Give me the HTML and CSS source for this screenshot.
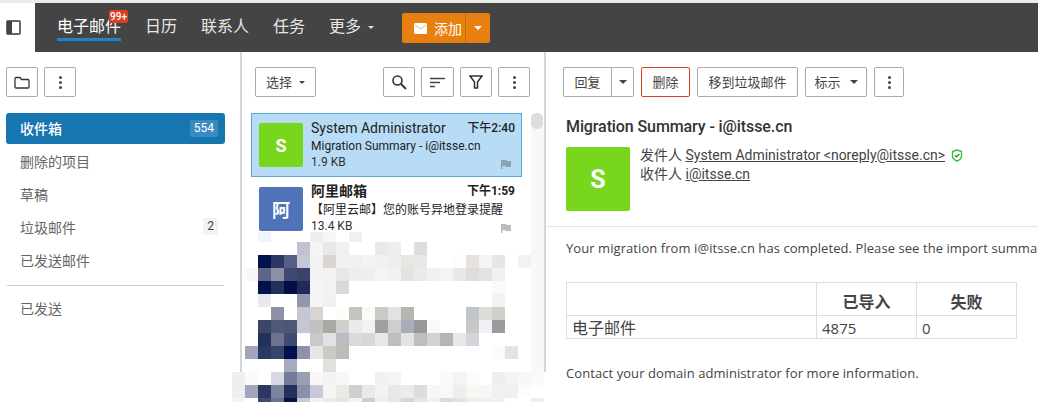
FILE: index.html
```html
<!DOCTYPE html>
<html lang="zh-CN">
<head>
<meta charset="utf-8">
<title>电子邮件</title>
<link rel="stylesheet" href="styles.css">
</head>
<body>
<header class="topbar">
  <div class="toggle">
    <svg width="15" height="15" viewBox="0 0 15 15"><rect x="1" y="1" width="13" height="13" fill="#fff" stroke="#666" stroke-width="2" rx="1"/><rect x="1" y="1" width="5" height="13" fill="#444"/></svg>
  </div>
  <nav class="nav">
    <div class="nav-link active">电子邮件<span class="count">99+</span></div>
    <div class="nav-link">日历</div>
    <div class="nav-link">联系人</div>
    <div class="nav-link">任务</div>
    <div class="nav-link">更多<span class="caret light"></span></div>
    <div class="add">
      <div class="add-main">
        <svg width="13" height="11" viewBox="0 0 13 11"><rect width="13" height="11" rx="1.5" fill="#fff"/><path d="M1 2l5.5 4L12 2" fill="none" stroke="#f0b070" stroke-width="1"/></svg>
        添加
      </div>
      <div class="add-drop"><span class="caret white"></span></div>
    </div>
  </nav>
</header>
<main class="main">
  <aside class="sidebar">
    <div class="toolbar">
      <button class="btn icon">
        <svg width="16" height="13" viewBox="0 0 16 13"><path d="M1 2.500a1 1 0 0 1 1-1h4l1.500 2H14a1 1 0 0 1 1 1V11a1 1 0 0 1-1 1H2a1 1 0 0 1-1-1z" fill="none" stroke="#333" stroke-width="1.300"/></svg>
      </button>
      <button class="btn icon"><span class="dots"><i></i><i></i><i></i></span></button>
    </div>
    <ul class="folders">
      <li class="folder selected">收件箱<span class="num">554</span></li>
      <li class="folder">删除的项目</li>
      <li class="folder">草稿</li>
      <li class="folder">垃圾邮件<span class="num">2</span></li>
      <li class="folder">已发送邮件</li>
    </ul>
    <hr class="rule">
    <ul class="folders">
      <li class="folder">已发送</li>
    </ul>
  </aside>
  <section class="list">
    <div class="toolbar list-tools">
      <button class="btn select">选择<span class="caret"></span></button>
      <div class="spacer"></div>
      <button class="btn icon">
        <svg width="16" height="16" viewBox="0 0 16 16"><circle cx="6.500" cy="6.500" r="4.500" fill="none" stroke="#333" stroke-width="1.600"/><path d="M10 10l5 5" stroke="#333" stroke-width="1.800"/></svg>
      </button>
      <button class="btn icon sort">
        <svg width="15" height="11" viewBox="0 0 15 11"><path d="M0 1.500h15M0 5.500h10M0 9.500h5" stroke="#444" stroke-width="1.400"/></svg>
      </button>
      <button class="btn icon">
        <svg width="14" height="14" viewBox="0 0 14 14"><path d="M1 1h12L8.500 7v6h-3V7z" fill="none" stroke="#333" stroke-width="1.500"/></svg>
      </button>
      <button class="btn icon"><span class="dots"><i></i><i></i><i></i></span></button>
    </div>
    <div class="msgs">
      <article class="msg current">
        <div class="avatar small green">S</div>
        <div class="msg-body">
          <div class="msg-top"><span>System Administrator</span><span class="time">下午2:40</span></div>
          <div class="msg-sub">Migration Summary - i@itsse.cn</div>
          <div class="msg-size">1.9 KB
            <svg class="flag" width="10" height="9" viewBox="0 0 10 9"><path d="M0 0h5l1 1h4v6H5L4 6H1.500v3H0z" fill="#8ba3b5"/></svg>
          </div>
        </div>
      </article>
      <article class="msg unread">
        <div class="avatar small blue">阿</div>
        <div class="msg-body">
          <div class="msg-top"><span>阿里邮箱</span><span class="time">下午1:59</span></div>
          <div class="msg-sub">【阿里云邮】您的账号异地登录提醒</div>
          <div class="msg-size">13.4 KB
            <svg class="flag" width="10" height="9" viewBox="0 0 10 9"><path d="M0 0h5l1 1h4v6H5L4 6H1.500v3H0z" fill="#bbb"/></svg>
          </div>
        </div>
      </article>
      <div class="track"><div class="thumb"></div></div>
    </div>
  </section>
  <section class="reader">
    <div class="toolbar reader-tools">
      <div class="group">
        <button class="btn joined-l">回复</button>
        <button class="btn joined-r"><span class="caret big"></span></button>
      </div>
      <button class="btn danger">删除</button>
      <button class="btn move">移到垃圾邮件</button>
      <button class="btn mark">标示<span class="caret big"></span></button>
      <button class="btn icon narrow"><span class="dots"><i></i><i></i><i></i></span></button>
    </div>
    <h1 class="subject">Migration Summary - i@itsse.cn</h1>
    <div class="meta">
      <div class="avatar large green">S</div>
      <div class="people">
        <div>发件人 <a class="addr">System Administrator &lt;noreply@itsse.cn&gt;</a>
          <svg class="shield" width="12" height="13" viewBox="0 0 12 13"><path d="M6 1l4.500 1.500V7c0 2.500-2 4-4.500 5C3.500 11 1.500 9.500 1.500 7V2.500z" fill="none" stroke="#2ec13c" stroke-width="1.400"/><path d="M3.800 6.300l1.700 1.700 2.800-3" fill="none" stroke="#2a7a3a" stroke-width="1.200"/></svg>
        </div>
        <div>收件人 <a class="addr">i@itsse.cn</a></div>
      </div>
    </div>
    <div class="content">
      <p class="line first">Your migration from i@itsse.cn has completed. Please see the import summary below for details.</p>
      <table class="summary">
        <tr class="head"><th class="c1"></th><th class="c2">已导入</th><th class="c3">失败</th></tr>
        <tr class="row"><td class="lead">电子邮件</td><td>4875</td><td>0</td></tr>
      </table>
      <p class="line">Contact your domain administrator for more information.</p>
    </div>
  </section>
</main>
<div class="mosaic" id="mosaic" aria-hidden="true"></div>
<script src="mosaic.js"></script>
</body>
</html>
```
FILE: styles.css
```css
* { box-sizing: border-box; }
html, body { margin: 0; height: 100%; }
body {
  width: 1038px;
  height: 402px;
  overflow: hidden;
  background: #fff;
  color: #333;
  font-family: Roboto, "Noto Sans CJK SC", sans-serif;
  font-size: 14px;
  position: relative;
  display: flex;
  flex-direction: column;
  border-top: 3px solid #ececec;
}
.topbar { display: flex; height: 49px; flex: none; }
.toggle { width: 35px; background: #fff; display: flex; padding: 17px 0 0 6px; }
.toggle svg { display: block; }
.nav {
  flex: 1;
  background: #444;
  display: flex;
  align-items: flex-start;
  padding-left: 22px;
  gap: 24px;
}
.nav-link {
  position: relative;
  color: #e8e8e8;
  font-size: 16px;
  line-height: 24px;
  margin-top: 12px;
  height: 24px;
  white-space: nowrap;
}
.nav-link.active { color: #fff; border-bottom: 3px solid #1b86c9; height: 23px; line-height: 24px; box-sizing: content-box; }
.count {
  position: absolute;
  left: 52px;
  top: -5px;
  width: 19px;
  height: 13px;
  background: #d9411e;
  color: #fff;
  border-radius: 2px;
  font-size: 10px;
  font-weight: 500;
  line-height: 13px;
  text-align: center;
}
.caret {
  display: inline-block;
  width: 0;
  height: 0;
  margin-left: 7px;
  vertical-align: middle;
  border-left: 3px solid transparent;
  border-right: 3px solid transparent;
  border-top: 3px solid #444;
}
.caret.light { border-top-color: #ddd; }
.caret.white { border-left-width: 4px; border-right-width: 4px; border-top: 4px solid #fff; margin: 0; }
.caret.big { border-left-width: 4px; border-right-width: 4px; border-top-width: 4px; margin-left: 9px; }
.add {
  display: flex;
  height: 30px;
  margin-top: 10px;
  margin-left: 4px;
  background: #e8800f;
  border-radius: 2px;
  color: #fff;
}
.add-main {
  width: 64px;
  padding-left: 12px;
  display: flex;
  align-items: center;
  gap: 7px;
  font-size: 14px;
  border-right: 1px solid #c46c0c;
}
.add-drop { width: 24px; display: flex; align-items: center; justify-content: center; }

.main { flex: 1; display: flex; min-height: 0; }
.sidebar { width: 242px; flex: none; border-right: 2px solid #d6d6d6; padding: 0 15px 0 6px; }
.toolbar { display: flex; gap: 6px; padding-top: 15px; height: 45px; }
.btn {
  height: 30px;
  border: 1px solid #aaa;
  border-radius: 2px;
  background: #fff;
  color: #444;
  font: 13px/1 Roboto, "Noto Sans CJK SC", sans-serif;
  padding: 0 10px;
  display: flex;
  align-items: center;
  justify-content: center;
  white-space: nowrap;
}
.btn.icon { width: 32px; padding: 0; }
.btn.narrow { width: 30px; }
.btn.sort { width: 33px; }
.dots { display: flex; flex-direction: column; gap: 2px; }
.dots i { display: block; width: 3px; height: 3px; border-radius: 50%; background: #444; }
.folders { list-style: none; margin: 16px 0 0; padding: 0; }
.folder {
  height: 33px;
  display: flex;
  align-items: center;
  justify-content: space-between;
  padding: 0 7px 0 14px;
  color: #666;
  font-size: 14px;
}
.folder.selected { height: 31px; padding-bottom: 2px; background: #1776b0; color: #fff; border-radius: 3px; font-weight: 500; }
.num {
  min-width: 14px;
  height: 17px;
  padding: 0 4px;
  border-radius: 2px;
  background: #f3f3f3;
  color: #444;
  font-size: 12px;
  line-height: 17px;
  text-align: center;
  font-weight: 400;
}
.selected .num { background: #3c8bc0; color: #fff; min-width: 27px; margin-top: 2px; }
.rule { border: 0; border-top: 1px solid #ccc; margin: 9px 1px 0; }
.folders + .rule + .folders { margin-top: 5px; }

.list { width: 304px; flex: none; border-right: 2px solid #d6d6d6; }
.list-tools { padding-left: 13px; padding-right: 14px; }
.select { width: 61px; padding: 0; }
.spacer { flex: 1; }
.msgs { position: relative; margin: 16px 0 0 9px; }
.msg { width: 271px; height: 64px; display: flex; padding: 9px 7px; }
.msg.current { background: #b8dcf5; border: 1px solid #57a8d6; }
.msg.unread { padding: 10px 7px 0 8px; }
.avatar {
  flex: none;
  border-radius: 2px;
  color: #fff;
  display: flex;
  align-items: center;
  justify-content: center;
  font-weight: 700;
}
.small { width: 44px; height: 44px; font-size: 18px; }
.large { width: 64px; height: 64px; font-size: 25px; }
.green { background: #78d71d; }
.blue { background: #4f73b8; }
.msg-body { flex: 1; min-width: 0; margin-left: 8px; margin-top: -4px; margin-right: -1px; color: #222; }
.unread .msg-body { margin-top: -5px; margin-right: 0; }
.msg-top { display: flex; justify-content: space-between; font-size: 14px; line-height: 19px; }
.unread .msg-top { font-weight: 700; }
.time { font-size: 12px; font-weight: 500; }
.unread .time { font-weight: 700; }
.msg-sub { font-size: 12px; line-height: 17px; white-space: nowrap; }
.unread .msg-sub { margin-top: 1px; }
.msg-size { position: relative; font-size: 12px; line-height: 15px; color: #333; }
.flag { position: absolute; right: 4px; top: 5px; }
.track { position: absolute; left: 280px; top: 0; width: 13px; height: 260px; background: linear-gradient(#fff 15px, #f8f8f8 15px); }
.thumb { width: 12px; height: 16px; background: #ddd; border-radius: 5px; }

.reader { flex: 1; min-width: 0; overflow: hidden; }
.reader-tools { padding-left: 17px; gap: 7px; }
.group { display: flex; }
.joined-l { width: 48px; padding: 0; border-radius: 2px 0 0 2px; border-right: 0; }
.joined-r { width: 23px; padding: 0; border-radius: 0 2px 2px 0; }
.joined-r .caret { margin: 0; }
.danger { width: 49px; padding: 0; border-color: #d9411e; }
.move { width: 101px; padding: 0; }
.mark { width: 62px; padding: 0; }
.subject { font-size: 16px; font-weight: 500; letter-spacing: -.1px; line-height: 20px; margin: 20px 0 0 20px; color: #333; }
.meta { display: flex; margin: 10px 0 0 20px; gap: 10px; height: 79px; }
.people { font-size: 14px; line-height: 19px; color: #444; margin-top: -1px; }
.addr { text-decoration: underline; }
.shield { vertical-align: -2px; margin-left: 2px; }
.content { border-top: 1px solid #e4e4e4; padding: 12px 0 0 20px; font-family: "Open Sans", "Noto Sans CJK SC", sans-serif; font-size: 13px; letter-spacing: .07px; color: #444; }
.line { margin: 0; line-height: 18px; white-space: nowrap; }
.summary { border-collapse: collapse; margin: 25px 0 25px; width: 451px; table-layout: fixed; font-size: 15px; letter-spacing: 0; }
.summary th, .summary td { border: 1px solid #ddd; padding: 0; }
.head { height: 33px; }
.head th { font-size: 16px; line-height: 20px; font-weight: 700; padding-top: 6px; }
.row { height: 23px; }
.row td { padding-left: 5px; line-height: 20px; padding-top: 1px; }
.summary .lead { font-size: 16px; }
.c1 { width: 250px; }
.c2, .c3 { width: 100px; }

.mosaic {
  position: absolute;
  left: 232px;
  top: 229px;
  display: grid;
  grid-template-columns: repeat(25, 13px);
  grid-template-rows: 10px repeat(12, 13px) 4px;
}
```
FILE: mosaic.js
```js
var rows = [
  {2:"f0f4fb",6:"f0efed",7:"f5f6f7",9:"eff0f2"},
  {5:"c0c2d2",6:"f4f4f4",7:"e9e8e6",8:"eff0f2",11:"e8e9eb",12:"eeeeee",14:"dddddc"},
  {2:"03114c",3:"2b3865",4:"565f82",5:"c6c8d6",6:"f3f3f3",7:"d9d6d2",8:"f0f1f1",9:"eff0f0",10:"f2f3f4",11:"f1f1f2",12:"eeeeee",13:"e8e5e2",14:"e8e8e6",17:"fdfdfb",18:"e4e1de",19:"f4f4f2",20:"e6e6e6",22:"f0f2f5"},
  {1:"f8f8f8",2:"5e6688",3:"8b90a6",4:"404a70",5:"3a4468",6:"f3f3f3",7:"f2f2f2",8:"e7e7e7",9:"f0eeec",10:"eeeff0",11:"f4f4f5",12:"f0f1f2",13:"e3e3e2",14:"e9ebea",15:"f0f0ee",16:"f3f4f6",17:"e8e8e9",18:"dddddd",19:"e4e3e1",20:"f0f1f3"},
  {2:"03114c",3:"253059",4:"020f48",5:"1f2a58",6:"f6f6f6",7:"f2f2f2",8:"d9d9d9",20:"fafafa"},
  {2:"e8e9ee",5:"9297ae",6:"f5f5f5",7:"f0f1f1",20:"f2f2f2"},
  {3:"8d92aa",5:"c4c6d4",6:"d6d5d2",8:"fcfcf9",9:"c4c4c1",10:"fbfaf7",11:"cbcac6",12:"e2e2e1",13:"b5b5b2",18:"c1c5c8",19:"dedcda",20:"d2cfcb"},
  {2:"3a4568",3:"4f5a7a",4:"4d5775",5:"c5c7d5",6:"c2c1bd",7:"a9a8a5",8:"cfcfcc",9:"ebeae8",10:"f3f2f0",11:"9f9f9f",12:"cfcfd0",13:"a9adb8",14:"989898",15:"f9f9fb",18:"c8c8c5",19:"f0f1f4",20:"9b9b9b"},
  {2:"22305c",3:"6b7390",4:"3f4a70",5:"fdfdfb",6:"cac8cc",7:"e2e2e6",8:"b9bcc2",9:"d9dadb",10:"d7d7d8",11:"e6e7e9",12:"c0bdbf",13:"e3e3e1",14:"bdbec0",15:"d2d2d2",16:"b2b6ba",17:"e8e8e6",18:"d2d6da"},
  {1:"a1a6bd",2:"2b3764",3:"38436c",4:"01104c",5:"8d91ab",6:"e6e6e6",7:"ccc8c3",8:"bdbcb7",20:"fbfbfb",21:"e3e3e3"},
  {4:"a6abc0",7:"dfe1df"},
  {0:"efefef",1:"fafafa",3:"d6d9e4",4:"747b99",5:"9a9fb4",6:"f8f8f8",7:"f3f3f3",8:"f7f7f7",11:"f0f1f4",12:"f4f4f5",16:"fafafa",17:"f4f4f2",18:"fbfbf9",20:"eeeeee",21:"f4f4f4",22:"f7f7f7",23:"f9f9f9"},
  {0:"eeeeee",1:"a2a7bd",2:"2c3862",3:"7d84a0",4:"243059",5:"8b90aa",6:"c8c9d6",7:"f3f5f4",8:"e9e9e6",9:"cfcfd0",10:"e9e9eb",11:"f2f2f2",12:"e9e8e8",13:"ebebeb",14:"dedddb",15:"f7f7f7",16:"f8f8f6",17:"eeeeef",18:"f6f6f3",19:"f7f7f5",20:"eff1f1",21:"eff0f0",22:"fcfcfc"},
  {0:"f5f5f5",2:"3e4a72",3:"6a7392",4:"03114c",5:"c6c9d8",6:"f4f2ef",7:"eaeaea",8:"e4e4e6",9:"f4f4f4",10:"cecece",11:"eeeeee",12:"e6e6e6",13:"d7d7d8",14:"e7e5e3",15:"f2f2f2",16:"dbdbdb",17:"e3e3e3",18:"eeeeef",19:"f0f0f2",20:"eff3f9",23:"eeeeee"}
];
var host = document.getElementById("mosaic");
rows.forEach(function (row, r) {
  for (var c = 0; c < 25; c++) {
    var cell = document.createElement("div");
    var fill = row[c] ? "#" + row[c] : (r >= 11 ? "#fff" : "transparent");
    cell.style.background = fill;
    host.appendChild(cell);
  }
});
```
